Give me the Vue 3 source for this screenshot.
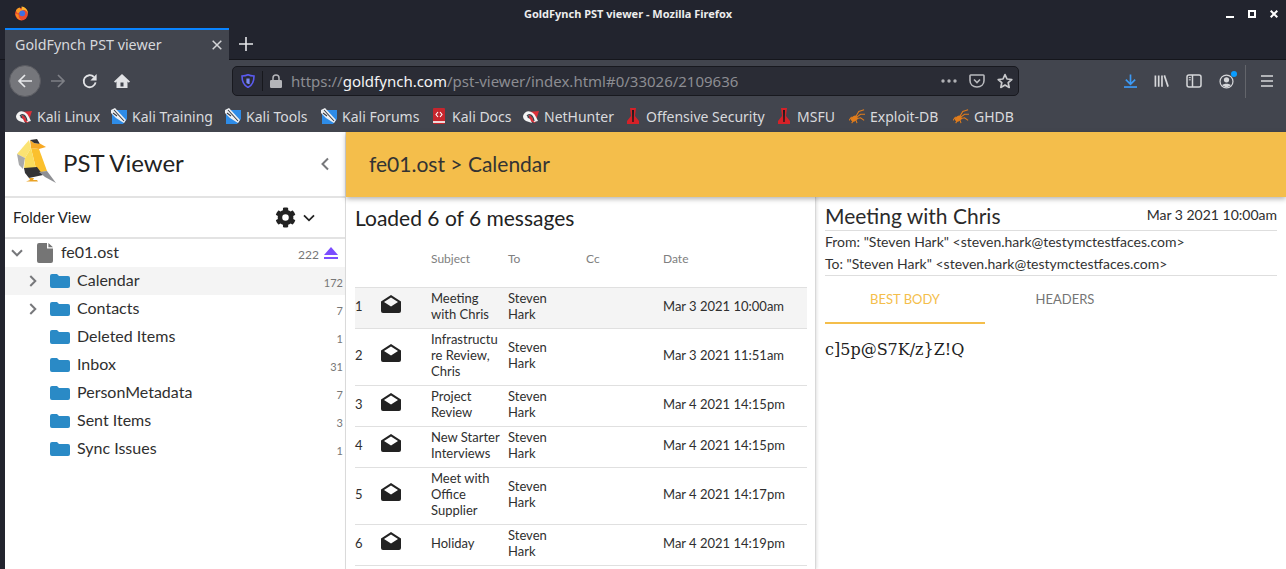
<template>
  <div class="window">
    <div class="titlebar">
      <svg class="ff-logo" viewBox="0 0 16 16" width="15" height="15">
        <circle cx="8" cy="8.600" r="6.800" fill="#ec4a2c" />
        <path d="M2 5C3 2.500 5 1.500 6.500 1.500 6 3 7 3.600 9 3.500 12 1.800 14.600 4.500 15 7 14.600 4.800 12.500 3.600 10 4L4 8Z" fill="#fb9a26" />
        <path d="M8 .5C11 .3 15 3.500 15 8.500 13.800 5 11.400 3.600 8.600 4.200Z" fill="#ffb52e" />
        <circle cx="8.800" cy="7.800" r="3.100" fill="#3f6fe0" />
        <path d="M1.400 8C2 12 5 15.200 8.400 15.200 5.600 14 4.400 11.600 5 9.400Z" fill="#f78a22" />
      </svg>
      <span class="win-title">GoldFynch PST viewer - Mozilla Firefox</span>
      <div class="win-btns">
        <svg viewBox="0 0 8 8" width="8" height="8"><rect x="0" y="6" width="8" height="2" fill="#fff" /></svg>
        <svg viewBox="0 0 8 8" width="8" height="8"><rect x="1" y="1" width="6" height="6" fill="none" stroke="#fff" stroke-width="2" /></svg>
        <svg viewBox="0 0 8 8" width="8" height="8"><path d="M.7.7l6.6 6.6M7.3.7L.7 7.3" stroke="#fff" stroke-width="2" /></svg>
      </div>
    </div>

    <div class="tabbar">
      <div class="tab">
        <span>GoldFynch PST viewer</span>
        <svg viewBox="0 0 10 10" width="10" height="10"><path d="M.7.7l8.6 8.6M9.3.7L.7 9.3" stroke="#d4d5d8" stroke-width="1.5" /></svg>
      </div>
      <svg class="newtab" viewBox="0 0 14 14" width="14" height="14"><path d="M7 0v14M0 7h14" stroke="#e6e7ea" stroke-width="1.6" /></svg>
    </div>

    <div class="navbar">
      <span class="back">
        <svg viewBox="0 0 16 16" width="16" height="16"><path d="M15 8H2M8 2L2 8l6 6" fill="none" stroke="#e8e9eb" stroke-width="1.7" /></svg>
      </span>
      <svg class="fwd" viewBox="0 0 16 16" width="16" height="16"><path d="M1 8h13M8 2l6 6-6 6" fill="none" stroke="#7d7f85" stroke-width="1.7" /></svg>
      <svg class="reload" viewBox="0 0 16 16" width="16" height="16"><path d="M13.600 9.400A6 6 0 1 1 12 4" fill="none" stroke="#e2e3e6" stroke-width="1.8" /><path d="M14.600 1v6.400H8.400Z" fill="#e2e3e6" /></svg>
      <svg class="home" viewBox="0 0 16 16" width="16" height="16"><path d="M8 1L0 8.600 1.200 9.800 2.500 8.600V15H13.500V8.600L14.800 9.800 16 8.600ZM6.500 13.400V9.500H9.500V13.400Z" fill="#e2e3e6" fill-rule="evenodd" /></svg>
      <div class="urlbar">
        <svg class="shield" viewBox="0 0 14 14" width="14" height="14"><path d="M7 .8C9 1.800 11 2 13 2 13 8 11 11.500 7 13.400 3 11.500 1 8 1 2 3 2 5 1.800 7 .8Z" fill="none" stroke="#5b5bf0" stroke-width="1.6" /><path d="M5.400 4.500H8.600V10H7.400L5.400 9Z" fill="#7b8bf5" /></svg>
        <i class="url-sep"></i>
        <svg class="lock" viewBox="0 0 12 14" width="12" height="14"><path d="M3 6V4a3 3 0 0 1 6 0v2" fill="none" stroke="#b4b5b9" stroke-width="1.5" /><rect y="6" width="12" height="8" rx="1.2" fill="#b4b5b9" /></svg>
        <span class="url"><span class="dim">https://</span>goldfynch.com<span class="dim">/pst-viewer/index.html#0/33026/2109636</span></span>
        <svg class="dots" viewBox="0 0 16 4" width="16" height="4"><circle cx="2" cy="2" r="1.7" /><circle cx="8" cy="2" r="1.7" /><circle cx="14" cy="2" r="1.7" /></svg>
        <svg class="pocket" viewBox="0 0 16 14" width="16" height="14"><path d="M1 1.700A.7.7 0 0 1 1.700 1H14.300A.7.7 0 0 1 15 1.700V6.500C15 10.500 12 13 8 13 4 13 1 10.500 1 6.500Z" fill="none" stroke="#b8b9bd" stroke-width="1.6" /><path d="M5 5.500L8 8.500 11 5.500" fill="none" stroke="#b8b9bd" stroke-width="1.6" /></svg>
        <svg class="star" viewBox="0 0 16 16" width="16" height="16"><path d="M8 1.600L10 6 14.800 6.500 11.200 9.700 12.200 14.400 8 12 3.800 14.400 4.800 9.700 1.200 6.500 6 6Z" fill="none" stroke="#c8c9cc" stroke-width="1.7" stroke-linejoin="round" /></svg>
      </div>
      <div class="tools">
        <svg viewBox="0 0 14 16" width="13" height="16"><path d="M7 1v10M2 6.500L7 11.500 12 6.500" fill="none" stroke="#3c9af5" stroke-width="1.8" /><rect y="13.600" width="14" height="1.8" fill="#3c9af5" /></svg>
        <svg viewBox="0 0 16 14" width="15" height="14"><path d="M1.500 1v12M5 1v12M8.500 1v12" stroke="#d6d7da" stroke-width="1.8" /><path d="M11 1l4 12" stroke="#d6d7da" stroke-width="1.8" /></svg>
        <svg viewBox="0 0 16 14" width="16" height="14"><rect x="1" y="1" width="14" height="12" rx="2" fill="none" stroke="#d6d7da" stroke-width="1.5" /><path d="M6.500 1v12" stroke="#d6d7da" stroke-width="1.5" /><path d="M2.800 3.600h2M2.800 5.800h2" stroke="#d6d7da" /></svg>
        <span class="account">
          <svg viewBox="0 0 16 16" width="15" height="15"><circle cx="8" cy="8" r="6.900" fill="none" stroke="#d6d7da" stroke-width="1.3" /><circle cx="8" cy="6.200" r="2.800" fill="#d6d7da" /><path d="M3.400 12C4.600 9.800 11.400 9.800 12.600 12 10 14.600 6 14.600 3.400 12Z" fill="#d6d7da" /></svg>
          <i class="badge"></i>
        </span>
        <i class="tool-sep"></i>
        <svg viewBox="0 0 12 12" width="12" height="12"><path d="M0 1h12M0 6h12M0 11h12" stroke="#d6d7da" stroke-width="1.6" /></svg>
      </div>
    </div>

    <div class="bookmarks">
      <div v-for="b in bookmarks" :key="b.name" class="bookmark" :style="{ width: b.width + 'px' }">
        <svg v-if="b.icon === 'kali'" viewBox="0 0 16 16" width="16" height="16">
          <path d="M5 4L16 3 12 15 7 13Z" fill="#dc2f38" />
          <path d="M0 8C2 1 10 2 13 9L15 13 11 14C10 9 7 6 4.500 8 4 9.500 5 10 7 11L9 15 3 13C1 12 0 10 0 8Z" fill="#f4f4f4" />
          <path d="M4 8C6 5 10 7 11 13" fill="none" stroke="#3a3d45" stroke-width="1.2" />
        </svg>
        <svg v-else-if="b.icon === 'training'" viewBox="0 0 16 16" width="16" height="16">
          <path d="M1 2H16V11L12 16H1Z" fill="#2e8ce8" />
          <path d="M0 2L4 0 15 12 13 15 5 10 0 5Z" fill="#eef0f3" />
          <path d="M3 2L13 13M2 5L6 8" stroke="#3a3d45" stroke-width="1.1" />
        </svg>
        <svg v-else-if="b.icon === 'docs'" viewBox="0 0 16 16" width="16" height="16">
          <rect x="2" y="0" width="12" height="16" rx="1" fill="#c6262e" />
          <rect x="2" y="13" width="12" height="2" fill="#f0d8d8" />
          <path d="M7 4L5 6.500 7 9M9 4L11 6.500 9 9" fill="none" stroke="#fff" stroke-width="1.1" />
        </svg>
        <svg v-else-if="b.icon === 'red'" viewBox="0 0 16 16" width="16" height="16">
          <path d="M5 0H11L10 8 14 13V16H2V13L6 8Z" fill="#d62128" />
          <path d="M7 2H9L8.700 14H7.300Z" fill="#1b1b1b" />
        </svg>
        <svg v-else viewBox="0 0 18 16" width="16" height="16">
          <ellipse cx="6" cy="11" rx="4" ry="3" fill="#e07c1c" transform="rotate(-35 6 11)" />
          <path d="M8 8L11 3 17 1M9 9L13 6 18 6M8 11L13 10 17 13M5 13L3 16M8 13L9 16M3 9L0 13" fill="none" stroke="#e07c1c" stroke-width="1.2" />
        </svg>
        <span>{{ b.name }}</span>
      </div>
    </div>

    <div class="page">
      <aside class="sidebar">
        <div class="brand">
          <svg class="bird" viewBox="0 0 40 46" width="40" height="46">
            <path d="M14 9L22 10 30 32 20 34Z" fill="#fbc02d" />
            <path d="M13 1L17 4 23 5 22 10 14 9Z" fill="#f4a928" />
            <path d="M13 1L20 0 23 5 17 4Z" fill="#333336" />
            <path d="M22 4L29 8 22 10Z" fill="#f7a823" />
            <path d="M12 1L0 15 8 19 14 9Z" fill="#fbe373" />
            <path d="M0 15L2 26 6 30 8 19Z" fill="#a8a9ab" />
            <path d="M8 19L14 9 20 34 7 30Z" fill="#f9dc5c" />
            <path d="M7 29L20 28 26 36 12 39 8 34Z" fill="#333336" />
            <path d="M22 33L30 32 39 44 28 38Z" fill="#8f9094" />
            <path d="M12 39H17L16 41H20L21 42.500H9L13 41Z" fill="#e9a225" />
          </svg>
          <span class="brand-name">PST Viewer</span>
          <svg class="collapse" viewBox="0 0 8 14" width="8" height="14"><path d="M7 1.500L1.500 7 7 12.500" fill="none" stroke="#77787b" stroke-width="2" /></svg>
        </div>
        <div class="folder-head">
          <span class="folder-label">Folder View</span>
          <svg class="gear" viewBox="0 0 512 512" width="21" height="21"><path d="M487 315l-42-25a192 192 0 0 0 0-68l42-25c5-3 7-8 6-14-11-35-30-67-55-94-4-4-10-5-15-2l-42 25c-18-15-38-27-60-34V29c0-6-4-11-9-12-36-8-73-8-109 0-5 1-9 6-9 12v49c-22 7-42 19-60 34L92 87c-5-3-11-2-15 2-25 27-44 59-55 94-2 6 1 11 6 14l42 25a192 192 0 0 0 0 68l-42 25c-5 3-7 8-6 14 11 35 30 67 55 94 4 4 10 5 15 2l42-25c18 15 38 27 60 34v49c0 6 4 11 9 12 36 8 73 8 109 0 5-1 9-6 9-12v-49c22-7 42-19 60-34l42 25c5 3 11 2 15-2 25-27 44-59 55-94 2-6-1-11-6-14zM256 336a80 80 0 1 1 0-160 80 80 0 0 1 0 160z" fill="#222" /></svg>
          <svg class="caret" viewBox="0 0 12 8" width="12" height="8"><path d="M1 1.300L6 6.300 11 1.300" fill="none" stroke="#222" stroke-width="1.8" /></svg>
        </div>
        <div class="tree">
          <div class="tree-row root">
            <svg class="tw" viewBox="0 0 12 8" width="12" height="8"><path d="M1 1.300L6 6.300 11 1.300" fill="none" stroke="#77787b" stroke-width="2" /></svg>
            <svg class="file" viewBox="0 0 16 20" width="16" height="20"><path d="M2 0H10V5.500H16V18A2 2 0 0 1 14 20H2A2 2 0 0 1 0 18V2A2 2 0 0 1 2 0ZM11.400 0L16 4.200H11.400Z" fill="#757575" /></svg>
            <span class="name">fe01.ost</span>
            <span class="count">222</span>
            <svg class="eject" viewBox="0 0 14 12" width="14" height="12"><path d="M7 0L14 8H0Z" fill="#7c4dff" /><rect y="10" width="14" height="2" fill="#7c4dff" /></svg>
          </div>
          <div v-for="f in folders" :key="f.name" class="tree-row" :class="{ active: f.active }">
            <svg v-if="f.arrow" class="arrow" viewBox="0 0 8 12" width="8" height="12"><path d="M1.300 1L6.300 6 1.300 11" fill="none" stroke="#77787b" stroke-width="2" /></svg>
            <span v-else class="arrow"></span>
            <svg class="folder" viewBox="0 0 20 14" width="20" height="14"><path d="M2 0H7L9 2H18A2 2 0 0 1 20 4V12A2 2 0 0 1 18 14H2A2 2 0 0 1 0 12V2A2 2 0 0 1 2 0Z" fill="#2a8ac6" /></svg>
            <span class="name">{{ f.name }}</span>
            <span class="count small">{{ f.count }}</span>
          </div>
        </div>
      </aside>

      <div class="main">
        <header class="banner">fe01.ost &gt; Calendar</header>
        <div class="panes">
          <section class="list">
            <h2>Loaded 6 of 6 messages</h2>
            <div class="grid head">
              <span></span><span></span>
              <span>Subject</span><span>To</span><span>Cc</span><span>Date</span>
            </div>
            <div v-for="(m, i) in messages" :key="i" class="grid row" :class="{ selected: i === 0 }">
              <span>{{ i + 1 }}</span>
              <svg class="env" viewBox="0 0 20 18" width="20" height="18"><path d="M10 0L20 6.500V16A2 2 0 0 1 18 18H2A2 2 0 0 1 0 16V6.500ZM10 2.600L3 7 10 11.400 17 7Z" fill="#222" fill-rule="evenodd" /></svg>
              <span class="subject">{{ m.subject }}</span>
              <span class="to">Steven Hark</span>
              <span></span>
              <span>{{ m.date }}</span>
            </div>
          </section>
          <section class="detail">
            <div class="detail-top">
              <h3>Meeting with Chris</h3>
              <span>Mar 3 2021 10:00am</span>
            </div>
            <div class="addresses">
              <div>From: "Steven Hark" &lt;steven.hark@testymctestfaces.com&gt;</div>
              <div>To: "Steven Hark" &lt;steven.hark@testymctestfaces.com&gt;</div>
            </div>
            <div class="tabs">
              <span class="on">BEST BODY</span>
              <span>HEADERS</span>
            </div>
            <p class="body">c]5p@S7K/z}Z!Q</p>
          </section>
        </div>
      </div>
    </div>
  </div>
</template>

<script setup>
const bookmarks = [
  { name: 'Kali Linux', icon: 'kali', width: 95 },
  { name: 'Kali Training', icon: 'training', width: 114 },
  { name: 'Kali Tools', icon: 'training', width: 96 },
  { name: 'Kali Forums', icon: 'training', width: 110 },
  { name: 'Kali Docs', icon: 'docs', width: 92 },
  { name: 'NetHunter', icon: 'kali', width: 102 },
  { name: 'Offensive Security', icon: 'red', width: 151 },
  { name: 'MSFU', icon: 'red', width: 73 },
  { name: 'Exploit-DB', icon: 'bug', width: 104 },
  { name: 'GHDB', icon: 'bug', width: 70 }
]

const folders = [
  { name: 'Calendar', count: 172, arrow: true, active: true },
  { name: 'Contacts', count: 7, arrow: true },
  { name: 'Deleted Items', count: 1 },
  { name: 'Inbox', count: 31 },
  { name: 'PersonMetadata', count: 7 },
  { name: 'Sent Items', count: 3 },
  { name: 'Sync Issues', count: 1 }
]

const messages = [
  { subject: 'Meeting with Chris', date: 'Mar 3 2021 10:00am' },
  { subject: 'Infrastructure Review, Chris', date: 'Mar 3 2021 11:51am' },
  { subject: 'Project Review', date: 'Mar 4 2021 14:15pm' },
  { subject: 'New Starter Interviews', date: 'Mar 4 2021 14:15pm' },
  { subject: 'Meet with Office Supplier', date: 'Mar 4 2021 14:17pm' },
  { subject: 'Holiday', date: 'Mar 4 2021 14:19pm' }
]
</script>

<style>
html,
body {
  margin: 0;
  height: 100%;
  overflow: hidden;
  background: #22242e;
}
</style>

<style scoped>
.window {
  width: 1286px;
  height: 569px;
  overflow: hidden;
  display: flex;
  flex-direction: column;
  background: #22242e;
  font-family: "Noto Sans", sans-serif;
  color: #e4e5e8;
}
.titlebar {
  height: 28px;
  flex: none;
  display: grid;
  grid-template-columns: 1fr auto 1fr;
  align-items: center;
  padding: 0 8px 0 14px;
  box-sizing: border-box;
}
.ff-logo {
  margin-bottom: 2px;
}
.win-title {
  font-size: 11px;
  font-weight: 700;
  color: #eceded;
  margin: 0 36px 1px 0;
}
.win-btns {
  justify-self: end;
  display: flex;
  gap: 14px;
  margin-bottom: 1px;
}
.tabbar {
  height: 32px;
  flex: none;
  display: flex;
  align-items: center;
  padding-left: 5px;
  box-sizing: border-box;
  border-bottom: 1px solid #15161c;
}
.tab {
  width: 224px;
  height: 32px;
  box-sizing: border-box;
  border-top: 2px solid #0a84ff;
  background: #42454e;
  display: flex;
  align-items: center;
  justify-content: space-between;
  padding: 0 7px 0 10px;
  font-size: 14.3px;
  color: #d6d8dc;
}
.newtab {
  margin-left: 10px;
}
.navbar {
  height: 40px;
  flex: none;
  margin-left: 5px;
  background: #42454e;
  display: flex;
  align-items: center;
  padding: 2px 0 0 4px;
  box-sizing: border-box;
}
.back {
  width: 32px;
  height: 32px;
  border-radius: 50%;
  background: #75767b;
  border: 1px solid #5a5b61;
  box-sizing: border-box;
  display: flex;
  align-items: center;
  justify-content: center;
  margin-right: 9px;
}
.fwd {
  margin-right: 16px;
}
.reload {
  margin-right: 16px;
}
.home {
  margin-right: 102px;
}
.urlbar {
  width: 787px;
  height: 30px;
  box-sizing: border-box;
  background: #2a2c35;
  border: 1px solid #18191f;
  border-radius: 5px;
  display: flex;
  align-items: center;
  padding-left: 8px;
}
.shield {
  flex: none;
}
.url-sep {
  width: 1px;
  height: 20px;
  background: #17181d;
  margin: 0 7px;
}
.lock {
  flex: none;
  margin-right: 9px;
}
.url {
  flex: 1;
  font-size: 15px;
  color: #f4f4f5;
  white-space: nowrap;
}
.dim {
  color: #8c8d92;
}
.dots {
  fill: #b0b1b5;
  margin-right: 12px;
}
.pocket {
  margin-right: 12px;
}
.star {
  margin-right: 5px;
}
.tools {
  flex: 1;
  display: flex;
  align-items: center;
  padding-left: 105px;
  gap: 17px;
}
.account {
  position: relative;
  display: flex;
}
.badge {
  position: absolute;
  width: 6px;
  height: 6px;
  border-radius: 50%;
  background: #0a9dff;
  top: -3px;
  right: -3px;
}
.tool-sep {
  width: 1px;
  height: 33px;
  background: #63656b;
  margin: 0 -2px 0 -6px;
}
.bookmarks {
  height: 32px;
  flex: none;
  margin-left: 5px;
  background: #42454e;
  display: flex;
  align-items: center;
  padding-left: 11px;
  box-sizing: border-box;
  font-size: 14px;
  color: #d9dadd;
  white-space: nowrap;
}
.bookmark {
  display: flex;
  align-items: center;
  gap: 5px;
  flex: none;
}
.page {
  flex: 1;
  min-height: 0;
  margin-left: 5px;
  display: flex;
  background: #fff;
  font-family: Lato, sans-serif;
  color: #2d2d2d;
}
.sidebar {
  width: 341px;
  flex: none;
  border-right: 1px solid #dfdfdf;
  box-sizing: border-box;
}
.brand {
  height: 66px;
  box-sizing: border-box;
  border-bottom: 2px solid #e3e3e3;
  display: flex;
  align-items: center;
  padding: 0 16px 0 12px;
}
.bird {
  margin-bottom: 4px;
}
.brand-name {
  flex: 1;
  margin-left: 6px;
  font-size: 24px;
  color: #222;
  margin-bottom: 3px;
}
.folder-head {
  height: 41px;
  box-sizing: border-box;
  border-bottom: 2px solid #e3e3e3;
  display: flex;
  align-items: center;
  padding: 0 30px 0 8px;
  font-size: 15px;
}
.folder-label {
  flex: 1;
  color: #222;
  margin-bottom: 2px;
}
.caret {
  margin-left: 7px;
}
.tree-row {
  height: 28px;
  box-sizing: border-box;
  display: flex;
  align-items: center;
  padding-right: 2px;
  font-size: 16px;
}
.tree-row.active {
  background: #f4f4f4;
}
.root {
  padding-left: 6px;
  padding-right: 7px;
}
.tw {
  margin-right: 14px;
}
.file {
  margin-right: 8px;
}
.name {
  flex: 1;
  color: #2f2f2f;
  margin-bottom: 4px;
}
.count {
  font-size: 12px;
  color: #777;
  margin-top: 3px;
}
.eject {
  margin-left: 5px;
}
.arrow {
  width: 8px;
  margin-left: 24px;
  margin-right: 13px;
  flex: none;
}
.folder {
  margin-right: 7px;
  flex: none;
}
.count.small {
  font-size: 11px;
}
.main {
  flex: 1;
  min-width: 0;
  display: flex;
  flex-direction: column;
}
.banner {
  height: 65px;
  flex: none;
  box-sizing: border-box;
  background: #f4be4b;
  padding: 0 0 2px 23px;
  display: flex;
  align-items: center;
  font-size: 21px;
  color: #333;
  box-shadow: 0 2px 5px rgba(0, 0, 0, 0.3);
  position: relative;
}
.panes {
  flex: 1;
  min-height: 0;
  display: flex;
}
.list {
  width: 470px;
  flex: none;
  box-sizing: border-box;
  padding: 0 8px 0 9px;
  border-right: 1px solid #d8d8d8;
  box-shadow: 1px 0 3px rgba(0, 0, 0, 0.12);
}
.list h2 {
  margin: 0;
  height: 44px;
  box-sizing: border-box;
  padding-bottom: 4px;
  display: flex;
  align-items: center;
  font-size: 21px;
  font-weight: 400;
  color: #222;
}
.grid {
  display: grid;
  grid-template-columns: 25px 51px 77px 78px 77px 1fr;
  align-items: center;
  font-size: 13px;
  line-height: 16px;
  color: #2f2f2f;
}
.head {
  height: 46px;
  font-size: 12px;
  color: #808080;
  padding-bottom: 10px;
  box-sizing: border-box;
}
.row {
  border-top: 1px solid #e0e0e0;
  padding: 2px 0 6px;
  min-height: 32px;
}
.row.selected {
  background: #f4f4f4;
}
.row:last-child {
  border-bottom: 1px solid #e0e0e0;
}
.env {
  margin: 0 0 4px 1px;
}
.subject {
  width: 70px;
  overflow-wrap: anywhere;
}
.to {
  width: 50px;
}
.detail {
  flex: 1;
  min-width: 0;
  padding: 0 9px 0 9px;
}
.detail-top {
  height: 34px;
  box-sizing: border-box;
  border-bottom: 1px solid #dedede;
  display: flex;
  justify-content: space-between;
  font-size: 14px;
  line-height: 35px;
}
.detail-top h3 {
  margin: 0;
  font-size: 21px;
  font-weight: 400;
  line-height: 38px;
  color: #2b2b2b;
}
.addresses {
  font-size: 14px;
  line-height: 22px;
  height: 44px;
  border-bottom: 1px solid #dedede;
  color: #333;
}
.tabs {
  display: flex;
  height: 48px;
}
.tabs span {
  width: 160px;
  box-sizing: border-box;
  text-align: center;
  font-size: 13px;
  line-height: 46px;
  color: #757575;
}
.tabs .on {
  color: #f4be4b;
  border-bottom: 2px solid #f4be4b;
}
.body {
  margin: 16px 0 0;
  font-family: "DejaVu Serif", serif;
  font-size: 16px;
  line-height: 20px;
  color: #222;
}
</style>
